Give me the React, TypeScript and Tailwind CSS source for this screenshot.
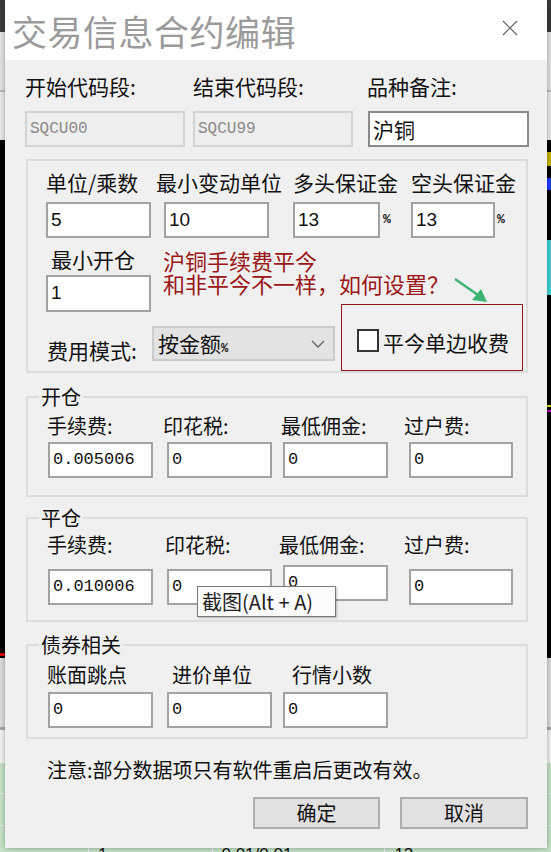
import React from 'react';

const CN = "font-['Noto_Sans_CJK_SC',sans-serif]";
const MONO = "font-['Liberation_Mono',monospace]";
const SANS = "font-['Liberation_Sans','Noto_Sans_CJK_SC',sans-serif]";

function Field({
  value,
  w,
  mono = true,
  className = '',
}: {
  value: string;
  w: string;
  mono?: boolean;
  className?: string;
}) {
  return (
    <div
      className={`${w} h-[36px] shrink-0 bg-white border-2 border-[#a2a2a2] flex items-center pl-[3px] text-[#111] ${
        mono ? `${MONO} text-[17px]` : `${SANS} text-[19px]`
      } ${className}`}
    >
      {value}
    </div>
  );
}

function Group({
  title,
  h,
  className = '',
  children,
}: {
  title?: string;
  h: string;
  className?: string;
  children: React.ReactNode;
}) {
  return (
    <div className={`relative ml-[21px] w-[502px] ${h} border-2 border-[#dcdcdc] ${className}`}>
      {title && (
        <span className="absolute -top-[11px] left-[11px] bg-[#f0f0f0] px-[2px] text-[20px] leading-none text-[#111]">
          {title}
        </span>
      )}
      {children}
    </div>
  );
}

export default function App() {
  return (
    <div className={`relative w-[551px] h-[852px] overflow-hidden bg-black ${CN}`}>
      {/* desktop behind the dialog */}
      <div className="flex flex-col w-full h-full">
        <div className="h-[32px] bg-[#3b3b3b]" />
        <div className="h-[58px] bg-[#e4e4e4]" />
        <div className="h-[2px] bg-[#bdbdbd]" />
        <div className="h-[48px] bg-[#ebebeb]" />
        <div className="relative h-[518px] bg-black">
          <div className="absolute right-0 top-[12px] w-[4px] h-[14px] bg-[#c8b400]" />
          <div className="absolute right-0 top-[38px] w-[4px] h-[12px] bg-[#1d3bff]" />
          <div className="absolute right-0 top-[100px] w-[4px] h-[55px] bg-[#3fd6d6]" />
          <div className="absolute right-0 top-[265px] w-[4px] h-[2px] bg-[#e0e000]" />
          <div className="absolute right-0 top-[270px] w-[4px] h-[2px] bg-[#d000d0]" />
          <div className="absolute left-0 bottom-[2px] w-[5px] h-[3px] bg-[#e00000]" />
        </div>
        <div className="h-[69px] bg-[#dedede]" />
        <div className="h-[3px] bg-[#a9a9a9]" />
        <div className="h-[33px] bg-[#f4f4f4]" />
        <div className="relative flex-1 bg-[#c6e4c9]">
          <div className="absolute left-0 right-0 top-[30px] h-px bg-[#e8f2e8]" />
          <div className="absolute left-0 right-0 top-[62px] h-px bg-[#e8f2e8]" />
          <div className={`absolute left-0 top-[83px] flex ${SANS} text-[17px] leading-none text-[#111]`}>
            <span className="ml-[88px] w-px h-[10px] bg-[#f4f4f4]" />
            <span className="ml-[9px]">1</span>
            <span className="ml-[105px] w-px h-[10px] bg-[#f4f4f4]" />
            <span className="ml-[8px]">0.01/0.01</span>
            <span className="ml-[92px] w-px h-[10px] bg-[#f4f4f4]" />
            <span className="ml-[9px]">13</span>
          </div>
        </div>
      </div>

      {/* dialog window */}
      <div className="absolute left-[5px] top-0 w-[542px] h-[848px] flex flex-col shadow-[0_0_6px_rgba(0,0,0,0.35)]">
        {/* title bar */}
        <div className="relative h-[60px] bg-white shrink-0">
          <div className="pl-[7px] pt-[13px] text-[35px] leading-none text-[#9b9b9b] tracking-[0.5px]">
            交易信息合约编辑
          </div>
          <svg className="absolute left-[497px] top-[20px]" width="16" height="16" viewBox="0 0 16 16">
            <path d="M1 1 L15 15 M15 1 L1 15" stroke="#5c5c5c" strokeWidth="1.1" fill="none" />
          </svg>
        </div>

        {/* body */}
        <div className="flex-1 bg-[#f0f0f0] flex flex-col text-[#111]">
          {/* code range */}
          <div className="flex mt-[16px] ml-[20px] text-[21px] leading-none">
            <span className="w-[168px]">开始代码段:</span>
            <span className="w-[174px]">结束代码段:</span>
            <span>品种备注:</span>
          </div>
          <div className="flex mt-[14px] ml-[20px]">
            <div className={`w-[160px] h-[36px] bg-[#eeeeee] border-2 border-[#d3d3d3] flex items-center pl-[3px] ${MONO} text-[16px] text-[#8a8a8a]`}>
              SQCU00
            </div>
            <div className={`ml-[8px] w-[160px] h-[36px] bg-[#eeeeee] border-2 border-[#d3d3d3] flex items-center pl-[3px] ${MONO} text-[16px] text-[#8a8a8a]`}>
              SQCU99
            </div>
            <div className="ml-[15px] w-[161px] h-[36px] bg-white border-2 border-[#8a8a8a] flex items-center pl-[3px] text-[21px] leading-none">
              沪铜
            </div>
          </div>

          {/* contract params */}
          <Group h="h-[214px]" className="mt-[12px]">
            <div className="flex mt-[11px] ml-[18px] text-[21px] leading-none">
              <span className="w-[110px]">单位/乘数</span>
              <span className="w-[137px]">最小变动单位</span>
              <span className="w-[118px]">多头保证金</span>
              <span>空头保证金</span>
            </div>
            <div className="flex items-center mt-[9px] ml-[18px]">
              <Field value="5" w="w-[105px]" mono={false} />
              <Field value="10" w="w-[105px]" mono={false} className="ml-[13px]" />
              <Field value="13" w="w-[87px]" mono={false} className="ml-[24px]" />
              <span className={`ml-[3px] w-[13px] ${MONO} text-[13px] font-bold`}>%</span>
              <Field value="13" w="w-[84px]" mono={false} className="ml-[15px]" />
              <span className={`ml-[2px] ${MONO} text-[13px] font-bold`}>%</span>
            </div>
            <div className="flex mt-[11px] ml-[18px]">
              <div className="flex flex-col">
                <span className="ml-[5px] text-[21px] leading-none">最小开仓</span>
                <Field value="1" w="w-[105px]" mono={false} className="mt-[5px] h-[37px]" />
              </div>
              <div className="ml-[12px] text-[22px] leading-none text-[#9a1616]">
                <div>沪铜手续费平今</div>
                <div className="mt-[1px]">和非平今不一样，如何设置？</div>
              </div>
            </div>
            <div className="flex items-start mt-[14px] ml-[19px]">
              <span className="mt-[14px] w-[105px] text-[21px] leading-none">费用模式:</span>
              <div className="w-[183px] h-[35px] bg-[#e3e3e3] border-2 border-[#cbcbcb] flex items-center pl-[4px] pr-[8px]">
                <span className="text-[21px] leading-none">
                  按金额<span className={`${MONO} text-[12px] font-bold`}>%</span>
                </span>
                <svg className="ml-auto" width="14" height="8" viewBox="0 0 14 8">
                  <path d="M1 1 L7 7 L13 1" stroke="#606060" strokeWidth="1.3" fill="none" />
                </svg>
              </div>
              <div className="ml-[22px] mt-[3px] w-[22px] h-[23px] bg-white border-2 border-[#333]" />
              <span className="ml-[4px] mt-[6px] text-[21px] leading-none">平今单边收费</span>
            </div>

            {/* annotation overlay */}
            <div className="absolute left-[313px] top-[143px] w-[182px] h-[67px] border border-[#8e1a1a] pointer-events-none" />
            <svg className="absolute left-[424px] top-[115px] pointer-events-none" width="40" height="32" viewBox="0 0 40 32">
              <path d="M3 3 L26 19" stroke="#3cb371" strokeWidth="2.4" fill="none" />
              <path d="M35 26 L20 24 L29 13 Z" fill="#3cb371" />
            </svg>
          </Group>

          {/* open position */}
          <Group title="开仓" h="h-[101px]" className="mt-[23px]">
            <div className="flex mt-[18px] ml-[19px] text-[20px] leading-none">
              <span className="w-[116px]">手续费:</span>
              <span className="w-[118px]">印花税:</span>
              <span className="w-[123px]">最低佣金:</span>
              <span>过户费:</span>
            </div>
            <div className="flex mt-[6px] ml-[20px]">
              <Field value="0.005006" w="w-[105px]" />
              <Field value="0" w="w-[105px]" className="ml-[14px]" />
              <Field value="0" w="w-[105px]" className="ml-[11px]" />
              <Field value="0" w="w-[104px]" className="ml-[21px]" />
            </div>
          </Group>

          {/* close position */}
          <Group title="平仓" h="h-[105px]" className="mt-[20px]">
            <div className="flex mt-[16px] ml-[19px] text-[20px] leading-none">
              <span className="w-[118px]">手续费:</span>
              <span className="w-[114px]">印花税:</span>
              <span className="w-[125px]">最低佣金:</span>
              <span>过户费:</span>
            </div>
            <div className="flex items-start mt-[10px] ml-[20px]">
              <Field value="0.010006" w="w-[105px]" className="mt-[4px]" />
              <Field value="0" w="w-[105px]" className="ml-[14px] mt-[4px]" />
              <Field value="0" w="w-[105px]" className="ml-[11px]" />
              <Field value="0" w="w-[104px]" className="ml-[21px] mt-[4px]" />
            </div>
          </Group>

          {/* bond */}
          <Group title="债券相关" h="h-[95px]" className="mt-[22px]">
            <div className="flex mt-[19px] ml-[19px] text-[20px] leading-none">
              <span className="w-[125px]">账面跳点</span>
              <span className="w-[120px]">进价单位</span>
              <span>行情小数</span>
            </div>
            <div className="flex mt-[7px] ml-[20px]">
              <Field value="0" w="w-[105px]" />
              <Field value="0" w="w-[105px]" className="ml-[14px]" />
              <Field value="0" w="w-[105px]" className="ml-[11px]" />
            </div>
          </Group>

          <div className="mt-[21px] ml-[42px] text-[20px] leading-none">
            注意:部分数据项只有软件重启后更改有效。
          </div>

          <div className="flex justify-end gap-[20px] mt-[17px] mr-[19px]">
            <button className="w-[127px] h-[32px] bg-[#e1e1e1] border-2 border-[#adadad] text-[20px] leading-none text-[#111]">
              确定
            </button>
            <button className="w-[128px] h-[32px] bg-[#e1e1e1] border-2 border-[#adadad] text-[20px] leading-none text-[#111]">
              取消
            </button>
          </div>
        </div>

        {/* screenshot tooltip */}
        <div className="absolute left-[192px] top-[586px] w-[139px] h-[31px] bg-[#fbfbfb] border border-[#7a7a7a] shadow-[1px_1px_2px_rgba(0,0,0,0.25)] flex items-center pl-[4px] text-[20px] leading-none text-[#222]">
          截图(Alt + A)
        </div>
      </div>
    </div>
  );
}
